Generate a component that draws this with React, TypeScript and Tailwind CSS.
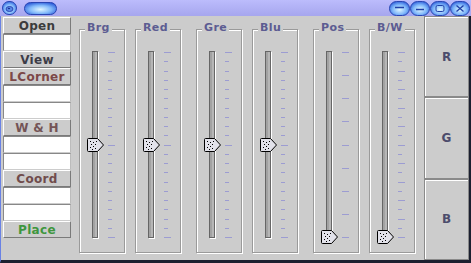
import React from 'react';

type Item = { kind: 'button' | 'field'; label?: string; tone?: string };

const leftItems: Item[] = [
  { kind: 'button', label: 'Open', tone: 'text-[#3c3c3c]' },
  { kind: 'field' },
  { kind: 'button', label: 'View', tone: 'text-[#3c3c48]' },
  { kind: 'button', label: 'LCorner', tone: 'text-[#7c4848]' },
  { kind: 'field' },
  { kind: 'field' },
  { kind: 'button', label: 'W & H', tone: 'text-[#745456]' },
  { kind: 'field' },
  { kind: 'field' },
  { kind: 'button', label: 'Coord', tone: 'text-[#704c4c]' },
  { kind: 'field' },
  { kind: 'field' },
  { kind: 'button', label: 'Place', tone: 'text-[#3e963e]' },
];

type Panel = { title: string; gap: string; ticks: number; major: (i: number) => boolean; pos: number };

const panels: Panel[] = [
  { title: 'Brg', gap: 'ml-0', ticks: 21, major: (i) => i % 10 === 0, pos: 0.5 },
  { title: 'Red', gap: 'ml-[10px]', ticks: 21, major: (i) => i % 10 === 0, pos: 0.5 },
  { title: 'Gre', gap: 'ml-[15px]', ticks: 21, major: (i) => i % 10 === 0, pos: 0.5 },
  { title: 'Blu', gap: 'ml-[10px]', ticks: 21, major: (i) => i % 10 === 0, pos: 0.5 },
  { title: 'Pos', gap: 'ml-[15px]', ticks: 9, major: () => true, pos: 1 },
  { title: 'B/W', gap: 'ml-[10px]', ticks: 21, major: (i) => i % 2 === 0, pos: 1 },
];

const Gloss: React.FC<{ id: string; w: number; h: number; children?: React.ReactNode }> = ({ id, w, h, children }) => (
  <svg width={w} height={h} className="block">
    <defs>
      <radialGradient id={id} cx="50%" cy="58%" r="62%">
        <stop offset="0%" stopColor="#e0f6ff" />
        <stop offset="55%" stopColor="#80b8fa" />
        <stop offset="100%" stopColor="#2a5ad8" />
      </radialGradient>
    </defs>
    <rect x="0.5" y="0.5" width={w - 1} height={h - 1} rx={h / 2 - 0.5} fill={`url(#${id})`} stroke="#2a46b4" />
    {children}
  </svg>
);

const TitleBar = () => (
  <div className="h-[16px] flex items-start bg-gradient-to-b from-[#bcbcfc] to-[#a6a6ee]">
    <div className="ml-[2px] mt-[1px]">
      <Gloss id="g-menu" w={15} h={14}>
        <ellipse cx="7.5" cy="8" rx="3.5" ry="2.5" fill="#5a8ae8" stroke="#2a46b4" />
        <ellipse cx="7" cy="7.5" rx="1.2" ry="0.8" fill="#1c3090" />
      </Gloss>
    </div>
    <div className="ml-[7px] mt-[2px]">
      <Gloss id="g-pill" w={33} h={13} />
    </div>
    <div className="ml-auto mr-[1px] mt-[1px] flex">
      <Gloss id="g-shade" w={21} h={15}>
        <line x1="6" y1="6.5" x2="15" y2="6.5" stroke="#2040a8" strokeWidth="1.5" />
      </Gloss>
      <Gloss id="g-min" w={20} h={15}>
        <line x1="6" y1="8.5" x2="14" y2="8.5" stroke="#2040a8" strokeWidth="1.5" />
      </Gloss>
      <Gloss id="g-max" w={20} h={15}>
        <rect x="6" y="4.5" width="8" height="6" rx="1.5" fill="none" stroke="#2040a8" />
      </Gloss>
      <Gloss id="g-close" w={20} h={15}>
        <path d="M6.5 4.5 L13.5 10.5 M13.5 4.5 L6.5 10.5" stroke="#2040a8" strokeWidth="1.3" />
      </Gloss>
    </div>
  </div>
);

const Thumb: React.FC<{ y: number }> = ({ y }) => (
  <g transform={`translate(7 ${y - 7})`}>
    <path d="M1.5 0.5 H10.5 L16.5 7 L10.5 13.5 H1.5 Q0.5 13.5 0.5 12.5 V1.5 Q0.5 0.5 1.5 0.5 Z" fill="#e2e2ea" stroke="#000" />
    {[[3, 3], [6, 4], [4, 6], [8, 6], [3, 9], [6, 8], [5, 11], [8, 10], [9, 3]].map(([x, yy], i) => (
      <rect key={i} x={x} y={yy} width="1" height="1" fill="#000" />
    ))}
  </g>
);

const Slider: React.FC<{ p: Panel }> = ({ p }) => {
  const top = 22;
  const bottom = 207;
  const step = (bottom - top) / (p.ticks - 1);
  const ty = top + p.pos * (bottom - top);
  return (
    <svg width="44" height="222" className="block">
      <rect x="12.5" y="21.5" width="5" height="186" fill="#b6b6b6" stroke="#666666" />
      <line x1="14" y1="22" x2="14" y2="207" stroke="#8e8e8e" />
      <line x1="18.5" y1="22" x2="18.5" y2="208.5" stroke="#ffffff" />
      <line x1="13" y1="208.5" x2="19" y2="208.5" stroke="#ffffff" />
      {Array.from({ length: p.ticks }, (_, i) => {
        const y = Math.round(top + i * step) + 0.5;
        return <line key={i} x1="28" y1={y} x2={p.major(i) ? 35 : 32} y2={y} stroke="#9c9cd2" />;
      })}
      <Thumb y={Math.round(ty)} />
    </svg>
  );
};

export default function App() {
  return (
    <div className="w-[471px] h-[263px] flex flex-col bg-[#cccccc] overflow-hidden font-['DejaVu_Sans',Verdana,sans-serif]">
      <TitleBar />
      <div className="flex-1 flex border-l border-l-[#6a82e4] border-r-2 border-r-[#1c2030] border-b-[3px] border-b-[#1c2030]">
        <div className="ml-[2px] mt-[1px] w-[68px] flex flex-col">
          {leftItems.map((it, i) =>
            it.kind === 'button' ? (
              <div
                key={i}
                className={`h-[17px] flex items-center justify-center bg-[#cccccc] border border-t-white border-l-white border-b-[#7a7a7a] border-r-[#7a7a7a] text-[12px] font-bold leading-none tracking-[0.3px] ${it.tone}`}
              >
                {it.label}
              </div>
            ) : (
              <div key={i} className="h-[17px] bg-white border border-t-[#888888] border-l-[#888888] border-r-[#bcbcbc] border-b-[#cccccc]" />
            )
          )}
        </div>
        <div className="ml-[8px] mt-[13px] flex items-start">
          {panels.map((p) => (
            <div
              key={p.title}
              className={`relative w-[46px] h-[224px] border border-[#9a9a9a] shadow-[inset_1px_1px_0_#fff,1px_1px_0_#fff] ${p.gap}`}
            >
              <span className="absolute top-[-9px] left-[5px] px-[2px] bg-[#cccccc] text-[11px] leading-[13px] font-bold tracking-[0.4px] text-[#5c5c92]">
                {p.title}
              </span>
              <Slider p={p} />
            </div>
          ))}
        </div>
        <div className="ml-auto w-[45px] flex flex-col">
          {['R', 'G', 'B'].map((l) => (
            <div
              key={l}
              className="flex-1 flex items-center justify-center border border-[#8a8a8a] shadow-[inset_1px_1px_0_#fff] text-[12px] font-bold text-[#4c4c6c]"
            >
              {l}
            </div>
          ))}
        </div>
      </div>
    </div>
  );
}
